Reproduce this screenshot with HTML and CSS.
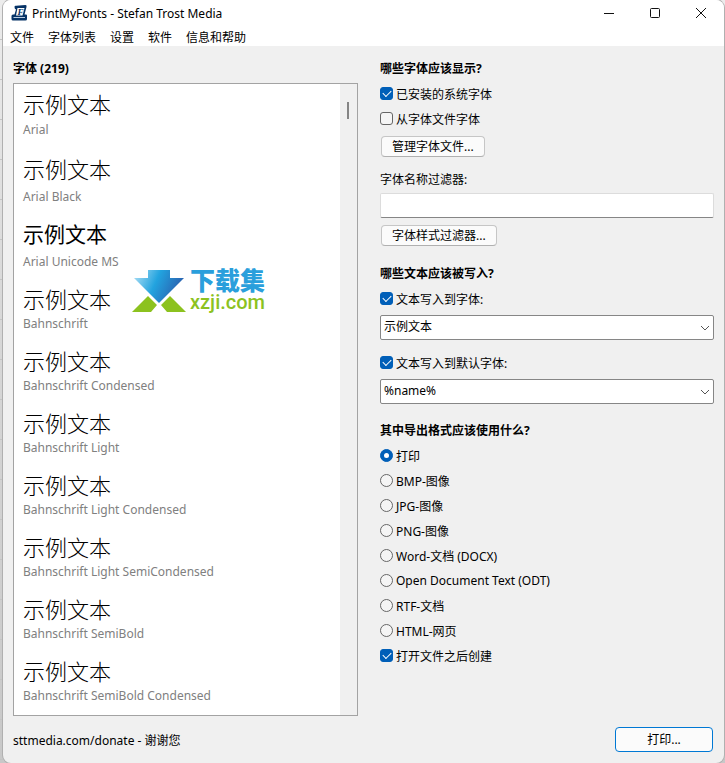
FILE: index.html
```html
<!DOCTYPE html>
<html lang="zh-CN">
  <head>
    <meta charset="UTF-8" />
    <meta name="viewport" content="width=device-width, initial-scale=1.0" />
    <title>PrintMyFonts - Stefan Trost Media</title>
    <link rel="stylesheet" href="styles.css">
  </head>
  <body>
    <div class="window">
      <header class="titlebar">
        <svg class="app-icon" width="17" height="16" viewBox="0 0 17 16" aria-hidden="true">
          <path d="M3.5 2 Q3.5 .5 5 .8 L14.5 0 Q16 0 15.5 2 L13.5 9.5 H15 Q16 9.5 16 10.5 V14 Q16 15.5 14.5 15.5 H2 Q.5 15.5 .5 14 V11 Q.5 9.5 2 9.5 H3.5 L5 4.5 Q3.5 4 3.5 2Z" fill="#063366" />
          <path d="M2.5 12.5 H14" stroke="#b9cbe0" fill="none" />
          <path d="M6.5 3 H13.5 L11.5 10.5 H5Z" fill="#fff" />
          <text x="6.5" y="10" class="app-icon-letter">F</text>
        </svg>
        <h1 class="title">PrintMyFonts - Stefan Trost Media</h1>
        <div class="window-buttons">
          <button type="button" aria-label="最小化">
            <svg width="12" height="12" viewBox="0 0 12 12"><path d="M1 6.5H11" /></svg>
          </button>
          <button type="button" aria-label="最大化">
            <svg width="12" height="12" viewBox="0 0 12 12"><rect x="1.5" y="1.5" width="9" height="9" rx="1" /></svg>
          </button>
          <button type="button" aria-label="关闭">
            <svg width="12" height="12" viewBox="0 0 12 12"><path d="M1 1L11 11M11 1L1 11" /></svg>
          </button>
        </div>
      </header>

      <nav class="menu">
        <a href="#">文件</a>
        <a href="#">字体列表</a>
        <a href="#">设置</a>
        <a href="#">软件</a>
        <a href="#">信息和帮助</a>
      </nav>

      <main class="content">
        <section class="fonts">
          <h2>字体 (219)</h2>
          <div class="font-box">
            <ul class="font-list">
              <li class="spaced"><span class="sample">示例文本</span><span class="name">Arial</span></li>
              <li class="tall"><span class="sample">示例文本</span><span class="name">Arial Black</span></li>
              <li class="tall"><span class="sample sans">示例文本</span><span class="name">Arial Unicode MS</span></li>
              <li><span class="sample">示例文本</span><span class="name">Bahnschrift</span></li>
              <li><span class="sample">示例文本</span><span class="name">Bahnschrift Condensed</span></li>
              <li><span class="sample">示例文本</span><span class="name">Bahnschrift Light</span></li>
              <li><span class="sample">示例文本</span><span class="name">Bahnschrift Light Condensed</span></li>
              <li><span class="sample">示例文本</span><span class="name">Bahnschrift Light SemiCondensed</span></li>
              <li><span class="sample">示例文本</span><span class="name">Bahnschrift SemiBold</span></li>
              <li><span class="sample">示例文本</span><span class="name">Bahnschrift SemiBold Condensed</span></li>
            </ul>
            <div class="scrollbar"><div class="thumb"></div></div>
            <div class="watermark">
              <svg width="54" height="43" viewBox="0 0 54 43" aria-hidden="true">
                <defs>
                  <linearGradient id="arrow" x1="0" y1="0" x2="1" y2="0.3">
                    <stop offset="0" stop-color="#b4e2f6" />
                    <stop offset=".5" stop-color="#22a3df" />
                    <stop offset="1" stop-color="#2a62b0" />
                  </linearGradient>
                </defs>
                <path d="M16 0H38V8H52L27 33L2 8H16Z" fill="url(#arrow)" />
                <path d="M16 26L25 35L19 42H0ZM38 26L54 42H35L29 35Z" fill="#8cc21f" />
              </svg>
              <div class="watermark-text">
                <span class="watermark-name">下载集</span>
                <span class="watermark-site">xzji.com</span>
              </div>
            </div>
          </div>
        </section>

        <form class="options">
          <h2>哪些字体应该显示?</h2>
          <label class="option"><input type="checkbox" checked />已安装的系统字体</label>
          <label class="option"><input type="checkbox" />从字体文件字体</label>
          <button type="button" class="button">管理字体文件...</button>
          <label class="option filter-label" for="nameFilter">字体名称过滤器:</label>
          <input type="text" id="nameFilter" class="text-input" />
          <button type="button" class="button">字体样式过滤器...</button>

          <h2 class="texts-heading">哪些文本应该被写入?</h2>
          <label class="option"><input type="checkbox" checked />文本写入到字体:</label>
          <div class="combo">
            <select aria-label="文本写入到字体">
              <option>示例文本</option>
            </select>
            <svg width="10" height="6" viewBox="0 0 10 6"><path d="M1 1L5 5L9 1" /></svg>
          </div>
          <label class="option second"><input type="checkbox" checked />文本写入到默认字体:</label>
          <div class="combo">
            <select aria-label="文本写入到默认字体">
              <option>%name%</option>
            </select>
            <svg width="10" height="6" viewBox="0 0 10 6"><path d="M1 1L5 5L9 1" /></svg>
          </div>

          <h2 class="format-heading">其中导出格式应该使用什么?</h2>
          <label class="option"><input type="radio" name="format" checked />打印</label>
          <label class="option"><input type="radio" name="format" />BMP-图像</label>
          <label class="option"><input type="radio" name="format" />JPG-图像</label>
          <label class="option"><input type="radio" name="format" />PNG-图像</label>
          <label class="option"><input type="radio" name="format" />Word-文档 (DOCX)</label>
          <label class="option"><input type="radio" name="format" />Open Document Text (ODT)</label>
          <label class="option"><input type="radio" name="format" />RTF-文档</label>
          <label class="option"><input type="radio" name="format" />HTML-网页</label>
          <label class="option"><input type="checkbox" checked />打开文件之后创建</label>
        </form>
      </main>

      <footer class="footer">
        <a href="#">sttmedia.com/donate - 谢谢您</a>
        <button type="button" class="button primary">打印...</button>
      </footer>
    </div>
  </body>
</html>
```
FILE: styles.css
```css
* {
  box-sizing: border-box;
}
body {
  margin: 0;
  padding: 0 1px 0 3px;
  min-height: 100vh;
  background: repeating-linear-gradient(
      transparent 0,
      transparent 39px,
      #c4c4c4 39px,
      #c4c4c4 40px
    ),
    linear-gradient(#ececec, #d8d8d8 40%, #c8c8c8);
  color: #000;
  font-family: "Noto Sans", "Noto Sans CJK SC", sans-serif;
  font-size: 12px;
}
h1,
h2,
ul {
  margin: 0;
  padding: 0;
  font-size: inherit;
}
a {
  color: inherit;
  text-decoration: none;
}
button,
input,
select {
  font: inherit;
  color: inherit;
  margin: 0;
}
.window {
  min-height: 100vh;
  background: #f0f0f0;
  border-radius: 8px;
  box-shadow: 0 0 0 1px #b0b0b0;
  overflow: hidden;
}

/* Title bar and menu */
.titlebar {
  display: flex;
  align-items: center;
  height: 26px;
  padding-left: 8px;
  background: #fff;
}
.app-icon {
  margin-right: 4px;
}
.app-icon-letter {
  font: italic bold 9px "Liberation Serif", serif;
  fill: #063366;
}
.title {
  flex: 1;
  font-weight: 400;
}
.window-buttons {
  display: flex;
}
.window-buttons button {
  display: flex;
  align-items: center;
  justify-content: center;
  width: 46px;
  height: 24px;
  padding: 0;
  border: none;
  background: none;
}
.window-buttons svg {
  fill: none;
  stroke: #111;
}
.menu {
  display: flex;
  gap: 14px;
  height: 20px;
  padding-left: 7px;
  background: #fff;
  line-height: 24px;
}

/* Main area */
.content {
  display: grid;
  grid-template-columns: 345fr 334fr;
  gap: 22px;
  padding: 10px 10px 0;
}
h2 {
  line-height: 25px;
  font-weight: 700;
}
.fonts {
  display: flex;
  flex-direction: column;
}
.font-box {
  position: relative;
  display: flex;
  margin-top: 2px;
  border: 1px solid #a3a3a3;
  background: #fff;
}
.font-list {
  flex: 1;
  padding: 7px 0 0 9px;
  list-style: none;
}
.font-list li {
  display: flex;
  flex-direction: column;
  gap: 4px;
  padding-bottom: 14px;
}
.font-list .spaced {
  gap: 5px;
  padding-bottom: 16px;
}
.font-list .tall {
  gap: 7px;
}
.font-list li:last-child {
  padding-bottom: 9px;
}
.sample {
  font-family: "Noto Sans CJK SC", sans-serif;
  font-size: 22px;
  font-weight: 300;
  line-height: 24px;
}
.sample.sans {
  font-size: 21px;
  font-weight: 400;
}
.name {
  color: #808080;
  line-height: 20px;
}
.scrollbar {
  width: 17px;
  padding: 18px 0 0 7px;
  background: #f0f0f0;
}
.thumb {
  width: 2px;
  height: 17px;
  background: #858585;
}
.watermark {
  position: absolute;
  top: 186px;
  left: 118px;
  display: flex;
  gap: 4px;
}
.watermark-text {
  display: flex;
  flex-direction: column;
}
.watermark-name {
  color: #2a9fdc;
  font-size: 25px;
  font-weight: 900;
  line-height: 20px;
}
.watermark-site {
  color: #8cc21f;
  font-family: Roboto, sans-serif;
  font-size: 20px;
  font-weight: 500;
  line-height: 24px;
}

/* Options */
.options {
  display: flex;
  flex-direction: column;
}
.option {
  display: flex;
  align-items: center;
  gap: 3px;
  height: 25px;
}
.texts-heading {
  margin-top: 15px;
}
.format-heading {
  margin-top: 14px;
}
.filter-label {
  margin-top: 9px;
}
.option.second {
  margin-top: 10px;
}
input[type="checkbox"],
input[type="radio"] {
  appearance: none;
  display: grid;
  place-items: center;
  width: 13px;
  height: 13px;
  border: 1px solid #666;
  border-radius: 3px;
  background: #f5f5f5;
}
input[type="radio"] {
  border-radius: 50%;
}
input[type="checkbox"]:checked,
input[type="radio"]:checked {
  border-color: #005fb8;
  background: #005fb8;
}
input[type="checkbox"]:checked::after {
  content: "";
  width: 7px;
  height: 4px;
  margin-bottom: 2px;
  border: solid #fff;
  border-width: 0 0 1px 1px;
  transform: rotate(-45deg);
}
input[type="radio"]:checked::after {
  content: "";
  width: 5px;
  height: 5px;
  border-radius: 50%;
  background: #fff;
}
.button {
  align-self: flex-start;
  height: 21px;
  margin: 5px 0 0 1px;
  padding: 0 10px;
  border: 1px solid #c6c6c6;
  border-bottom-color: #b0b0b0;
  border-radius: 4px;
  background: #fbfbfb;
  line-height: 18px;
}
.text-input {
  width: 100%;
  height: 25px;
  margin: 2px 0;
  padding: 0 4px;
  border: 1px solid #dcdcdc;
  border-bottom-color: #868686;
  border-radius: 2px;
  background: #fff;
}
.combo {
  position: relative;
  margin-top: 4px;
}
.combo select {
  appearance: none;
  display: block;
  width: 100%;
  height: 25px;
  padding: 0 20px 2px 3px;
  border: 1px solid #868686;
  border-radius: 2px;
  background: #fff;
}
.combo svg {
  position: absolute;
  top: 10px;
  right: 4px;
  fill: none;
  stroke: #555;
  pointer-events: none;
}

/* Footer */
.footer {
  display: flex;
  align-items: center;
  justify-content: space-between;
  padding: 11px 11px 11px 10px;
}
.button.primary {
  width: 98px;
  height: 25px;
  margin: 0;
  border-color: #0078d4;
}
```
